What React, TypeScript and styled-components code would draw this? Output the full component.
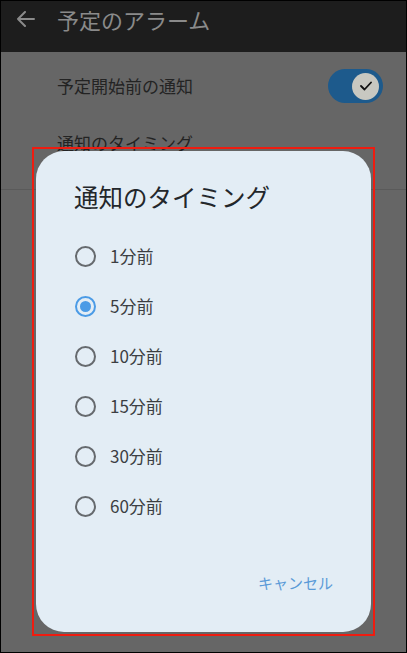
import styled, { createGlobalStyle } from "styled-components";

const FONT = `"Noto Sans CJK JP", "Noto Sans", Roboto, sans-serif`;

const OPTIONS = ["1分前", "5分前", "10分前", "15分前", "30分前", "60分前"];
const SELECTED = "5分前";

const GlobalStyle = createGlobalStyle`
    html, body {
        margin: 0;
        padding: 0;
        background: #000;
    }
    * {
        box-sizing: border-box;
    }
`;

export default function App(): JSX.Element {
    return (
        <>
            <GlobalStyle />
            <ScreenStyled>
                <AppBarStyled>
                    <BackButtonStyled aria-label="戻る">
                        <svg width="20" height="16" viewBox="0 0 20 16" fill="none">
                            <path d="M18 8H2M9 1L2 8L9 15" stroke="#8a8a8a" strokeWidth="2" strokeLinecap="round" strokeLinejoin="round" />
                        </svg>
                    </BackButtonStyled>
                    <AppBarTitleStyled>予定のアラーム</AppBarTitleStyled>
                </AppBarStyled>

                <SettingsListStyled>
                    <SettingRowStyled>
                        <SettingTextStyled>
                            <SettingTitleStyled>予定開始前の通知</SettingTitleStyled>
                        </SettingTextStyled>
                        <SwitchTrackStyled>
                            <SwitchThumbStyled>
                                <svg width="12" height="10" viewBox="0 0 12 10" fill="none">
                                    <path d="M1 5L4.5 8.5L11 1.5" stroke="#111" strokeWidth="1.8" strokeLinecap="round" strokeLinejoin="round" />
                                </svg>
                            </SwitchThumbStyled>
                        </SwitchTrackStyled>
                    </SettingRowStyled>
                    <SettingRowStyled $divider>
                        <SettingTextStyled>
                            <SettingTitleStyled>通知のタイミング</SettingTitleStyled>
                            <SettingSubtitleStyled>{SELECTED}</SettingSubtitleStyled>
                        </SettingTextStyled>
                    </SettingRowStyled>
                </SettingsListStyled>

                <OverlayStyled>
                    <HighlightStyled>
                        <DialogStyled>
                            <DialogTitleStyled>通知のタイミング</DialogTitleStyled>
                            <OptionListStyled>
                                {OPTIONS.map((label) => (
                                    <OptionStyled key={label}>
                                        <RadioStyled $checked={label === SELECTED} />
                                        <OptionLabelStyled>{label}</OptionLabelStyled>
                                    </OptionStyled>
                                ))}
                            </OptionListStyled>
                            <ActionsStyled>
                                <TextButtonStyled>キャンセル</TextButtonStyled>
                            </ActionsStyled>
                        </DialogStyled>
                    </HighlightStyled>
                </OverlayStyled>
            </ScreenStyled>
        </>
    );
}

// [== STYLES ==]
const ScreenStyled = styled.div`
    position: relative;
    width: 407px;
    height: 653px;
    border: 1px solid #000;
    background: #666666;
    font-family: ${FONT};
    overflow: hidden;
`;

const AppBarStyled = styled.header`
    height: 51px;
    background: #1d1d1d;
    display: flex;
    align-items: flex-start;
    padding: 4px 0 0 15px;
    gap: 21px;
`;

const BackButtonStyled = styled.button`
    background: none;
    border: none;
    padding: 0;
    margin-top: 6px;
    width: 20px;
    height: 16px;
    display: flex;
    cursor: pointer;
`;

const AppBarTitleStyled = styled.h1`
    margin: 0;
    font-size: 22px;
    line-height: 28px;
    font-weight: 400;
    color: #8a8a8a;
`;

const SettingsListStyled = styled.div`
    display: flex;
    flex-direction: column;
`;

const SettingRowStyled = styled.div<{ $divider?: boolean }>`
    display: flex;
    align-items: center;
    justify-content: space-between;
    padding: ${({ $divider }) => ($divider ? "12px 24px 12px 56px" : "17px 23px 16px 56px")};
    border-bottom: ${({ $divider }) => ($divider ? "1px solid #5a5a5a" : "none")};
`;

const SettingTextStyled = styled.div`
    display: flex;
    flex-direction: column;
    gap: 2px;
`;

const SettingTitleStyled = styled.span`
    font-size: 17px;
    line-height: 24px;
    color: #232323;
`;

const SettingSubtitleStyled = styled.span`
    font-size: 14px;
    line-height: 20px;
    color: #3a3a3a;
`;

const SwitchTrackStyled = styled.div`
    width: 55px;
    height: 34px;
    border-radius: 17px;
    background: #1d5a8c;
    display: flex;
    align-items: center;
    justify-content: flex-end;
    padding-right: 4px;
`;

const SwitchThumbStyled = styled.div`
    width: 27px;
    height: 27px;
    border-radius: 50%;
    background: #c8c8c1;
    display: flex;
    align-items: center;
    justify-content: center;
`;

const OverlayStyled = styled.div`
    position: absolute;
    inset: 0;
    padding: 146px 0 0 31px;
`;

const HighlightStyled = styled.div`
    width: 343px;
    height: 489px;
    border: 2px solid #ee1c10;
    padding: 2px;
`;

const DialogStyled = styled.div`
    height: 100%;
    background: #e3edf5;
    border-radius: 28px;
    display: flex;
    flex-direction: column;
    padding: 30px 30px 0 39px;
`;

const DialogTitleStyled = styled.h2`
    margin: 0 0 0 -1px;
    font-size: 24.5px;
    line-height: 32px;
    font-weight: 400;
    color: #23272b;
`;

const OptionListStyled = styled.div`
    display: flex;
    flex-direction: column;
    margin-top: 18px;
`;

const OptionStyled = styled.label`
    display: flex;
    align-items: center;
    gap: 14px;
    height: 50px;
    cursor: pointer;
`;

const RadioStyled = styled.span<{ $checked: boolean }>`
    width: 21px;
    height: 21px;
    border-radius: 50%;
    border: 2px solid ${({ $checked }) => ($checked ? "#4b9be6" : "#666a6e")};
    display: flex;
    align-items: center;
    justify-content: center;
    flex-shrink: 0;

    &::after {
        content: "";
        width: 11px;
        height: 11px;
        border-radius: 50%;
        background: #4b9be6;
        display: ${({ $checked }) => ($checked ? "block" : "none")};
    }
`;

const OptionLabelStyled = styled.span`
    font-size: 17px;
    line-height: 22px;
    color: #3b3e42;
`;

const ActionsStyled = styled.div`
    display: flex;
    justify-content: flex-end;
    margin-top: 32px;
`;

const TextButtonStyled = styled.button`
    background: none;
    border: none;
    font-family: ${FONT};
    font-size: 15px;
    line-height: 40px;
    padding: 0 8px;
    color: #5b9bd8;
    cursor: pointer;
`;
